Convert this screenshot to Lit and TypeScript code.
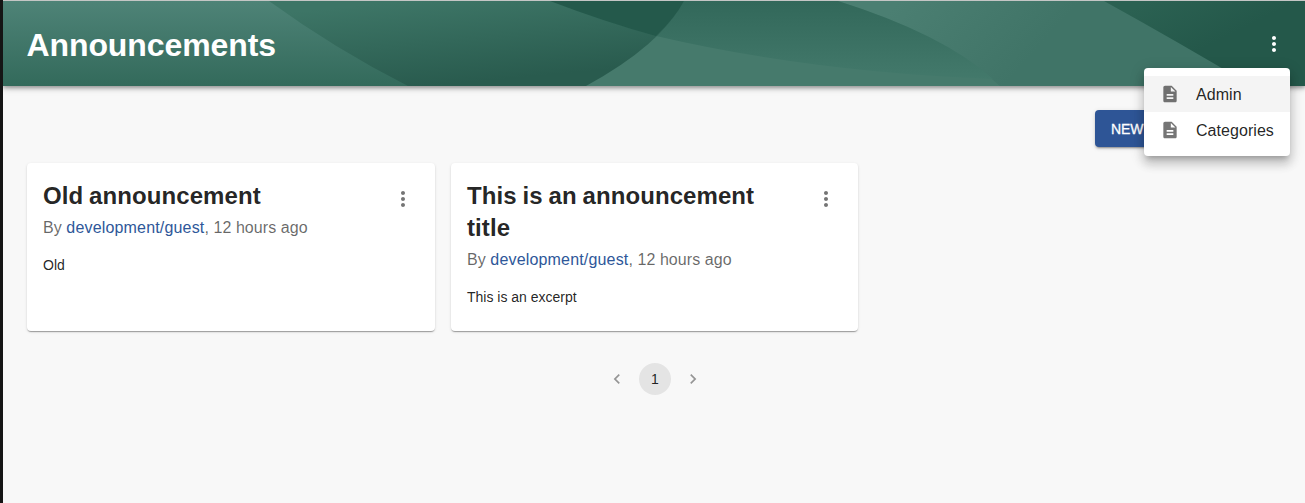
import { LitElement, html, css, svg } from "lit";
import { customElement, property } from "lit/decorators.js";

const kebab = svg`<path d="M12 8c1.1 0 2-.9 2-2s-.9-2-2-2-2 .9-2 2 .9 2 2 2zm0 2c-1.1 0-2 .9-2 2s.9 2 2 2 2-.9 2-2-.9-2-2-2zm0 6c-1.1 0-2 .9-2 2s.9 2 2 2 2-.9 2-2-.9-2-2-2z"/>`;
const doc = svg`<path d="M14 2H6c-1.1 0-1.99.9-1.99 2L4 20c0 1.1.89 2 1.99 2H18c1.1 0 2-.9 2-2V8l-6-6zm2 16H8v-2h8v2zm0-4H8v-2h8v2zm-3-5V3.5L18.500 9H13z"/>`;

@customElement("announcement-card")
export class AnnouncementCard extends LitElement {
  @property() heading = "";
  @property() excerpt = "";

  static styles = css`
    :host {
      display: flex;
      flex-direction: column;
      box-sizing: border-box;
      height: 168px;
      background: #fff;
      border-radius: 4px;
      box-shadow: 0 2px 1px -1px rgba(0, 0, 0, 0.2),
        0 1px 1px 0 rgba(0, 0, 0, 0.14), 0 1px 3px 0 rgba(0, 0, 0, 0.12);
    }
    .head { display: flex; padding: 16px; }
    .words { flex: 1; min-width: 0; padding-right: 16px; }
    h5 {
      margin: 0;
      font-size: 24px;
      line-height: 32px;
      font-weight: 700;
      letter-spacing: 0.08px;
      word-spacing: -0.9px;
      padding-top: 1px;
    }
    .by { font-size: 16px; line-height: 24px; padding-top: 4px; margin-bottom: -1px; color: rgba(0, 0, 0, 0.6); letter-spacing: 0.07px; }
    a { color: #2e5799; text-decoration: none; letter-spacing: 0.17px; }
    .menu { width: 48px; height: 40px; margin-right: -8px; display: flex; justify-content: center; align-items: center; }
    .menu svg { width: 24px; height: 24px; fill: rgba(0, 0, 0, 0.54); }
    p { margin: 0; padding: 0 16px; font-size: 14px; line-height: 20px; }
  `;

  render() {
    return html`
      <div class="head">
        <div class="words">
          <h5>${this.heading}</h5>
          <div class="by">By <a>development/guest</a>, 12 hours ago</div>
        </div>
        <div class="menu"><svg viewBox="0 0 24 24">${kebab}</svg></div>
      </div>
      <p>${this.excerpt}</p>
    `;
  }
}

@customElement("app-root")
export class AppRoot extends LitElement {
  static styles = css`
    :host {
      display: flex;
      flex-direction: column;
      box-sizing: border-box;
      height: 503px;
      overflow: hidden;
      position: relative;
      border-left: 3px solid #151515;
      background: #f8f8f8;
      color: rgba(0, 0, 0, 0.87);
      font-family: "Liberation Sans", Helvetica, Arial, sans-serif;
    }
    header {
      display: grid;
      flex: none;
      height: 85px;
      border-top: 1px solid #c4c6c5;
      box-shadow: 0 2px 4px rgba(0, 0, 0, 0.3), 0 1px 8px rgba(0, 0, 0, 0.22);
    }
    .art, .bar { grid-area: 1 / 1; }
    .art { width: 100%; height: 85px; display: block; }
    .bar { display: flex; align-items: center; justify-content: space-between; padding: 3px 19px 0 23.5px; color: #fff; z-index: 1; }
    h1 { margin: 0; font-size: 32px; line-height: 40px; font-weight: 700; letter-spacing: -0.1px; }
    .bar svg { width: 24px; height: 24px; fill: #fff; margin-bottom: 2px; }
    main { padding: 24px; }
    .actions { display: flex; justify-content: flex-end; height: 37px; margin-bottom: 16px; }
    button {
      width: 186px;
      border: 0;
      border-radius: 4px;
      padding: 1px 16px 0;
      text-align: left;
      background: #2e5596;
      color: #fff;
      font: 500 14px/24px "Liberation Sans", sans-serif;
      white-space: nowrap;
      letter-spacing: -0.15px;
      -webkit-text-stroke: 0.3px #fff;
      box-shadow: 0 3px 1px -2px rgba(0, 0, 0, 0.2), 0 2px 2px rgba(0, 0, 0, 0.14), 0 1px 5px rgba(0, 0, 0, 0.12);
    }
    .cards { display: grid; grid-template-columns: 408px 407px; gap: 16px; }
    .pages { display: flex; justify-content: center; align-items: center; padding: 32px 0 0 2px; gap: 12px; color: rgba(0, 0, 0, 0.87); font-size: 14px; }
    .pages svg { width: 20px; height: 20px; fill: rgba(0, 0, 0, 0.4); }
    .current { width: 32px; height: 32px; border-radius: 50%; background: #e4e4e4; display: flex; align-items: center; justify-content: center; }
    .popup {
      position: absolute;
      z-index: 3;
      top: 68px;
      right: 15px;
      width: 146px;
      box-sizing: border-box;
      padding: 8px 0;
      background: #fff;
      border-radius: 4px;
      box-shadow: 0 5px 5px -3px rgba(0, 0, 0, 0.2), 0 8px 10px 1px rgba(0, 0, 0, 0.14), 0 3px 14px 2px rgba(0, 0, 0, 0.12);
    }
    .item { display: flex; align-items: center; height: 36px; padding-left: 16px; font-size: 16px; gap: 16px; }
    .item.on { background: #f4f4f4; }
    .item span { padding-top: 2px; letter-spacing: 0.05px; }
    .item svg { width: 20px; height: 20px; fill: rgba(0, 0, 0, 0.54); }
  `;

  render() {
    return html`
      <header>
        <svg class="art" viewBox="3 1 1302 85" preserveAspectRatio="none">
          <defs>
            <linearGradient id="a" x1="0" y1="0" x2="0" y2="1"><stop stop-color="#4e8377"/><stop offset="1" stop-color="#336a5b"/></linearGradient>
            <linearGradient id="b" gradientUnits="userSpaceOnUse" x1="420" y1="0" x2="428" y2="86"><stop stop-color="#3d7566"/><stop offset="1" stop-color="#295b4e"/></linearGradient>
            <linearGradient id="d" x1="0" y1="0" x2="0" y2="1"><stop stop-color="#32685a"/><stop offset="1" stop-color="#43796b"/></linearGradient>
            <linearGradient id="f" gradientUnits="userSpaceOnUse" x1="900" y1="0" x2="1000" y2="90"><stop stop-color="#4b7f72"/><stop offset="1" stop-color="#407467"/></linearGradient>
            <linearGradient id="g" gradientUnits="userSpaceOnUse" x1="1150" y1="0" x2="1180" y2="60"><stop stop-color="#2b6152"/><stop offset="1" stop-color="#24584a"/></linearGradient>
          </defs>
          <rect x="3" y="1" width="1302" height="85" fill="#467a6c"/>
          <path fill="url(#f)" d="M838 1H1305V86H1000Q943 34 838 1Z"/>
          <path fill="url(#g)" d="M1104 1H1305V86H1252Q1180 43 1104 1Z"/>
          <path fill="url(#d)" d="M684 1H838Q943 34 993 79Q810 72 656 36Z"/>
          <path fill="url(#b)" d="M3 1H684Q661 45 586 86H3Z"/>
          <path fill="#24594b" d="M550 1H684Q675 18 656 36Q605 22 550 1Z"/>
          <path fill="url(#a)" d="M3 1H269Q335 49 408 86H3Z"/>
        </svg>
        <div class="bar">
          <h1>Announcements</h1>
          <svg viewBox="0 0 24 24">${kebab}</svg>
        </div>
      </header>
      <main>
        <div class="actions"><button>NEW</button></div>
        <div class="cards">
          <announcement-card heading="Old announcement" excerpt="Old"></announcement-card>
          <announcement-card heading="This is an announcement title" excerpt="This is an excerpt"></announcement-card>
        </div>
        <div class="pages">
          <svg viewBox="0 0 24 24"><path d="M15.410 7.410L14 6l-6 6 6 6 1.410-1.410L10.830 12z"/></svg>
          <span class="current">1</span>
          <svg viewBox="0 0 24 24"><path d="M10 6L8.590 7.410 13.170 12l-4.580 4.590L10 18l6-6z"/></svg>
        </div>
      </main>
      <div class="popup">
        <div class="item on"><svg viewBox="0 0 24 24">${doc}</svg><span>Admin</span></div>
        <div class="item"><svg viewBox="0 0 24 24">${doc}</svg><span>Categories</span></div>
      </div>
    `;
  }
}
